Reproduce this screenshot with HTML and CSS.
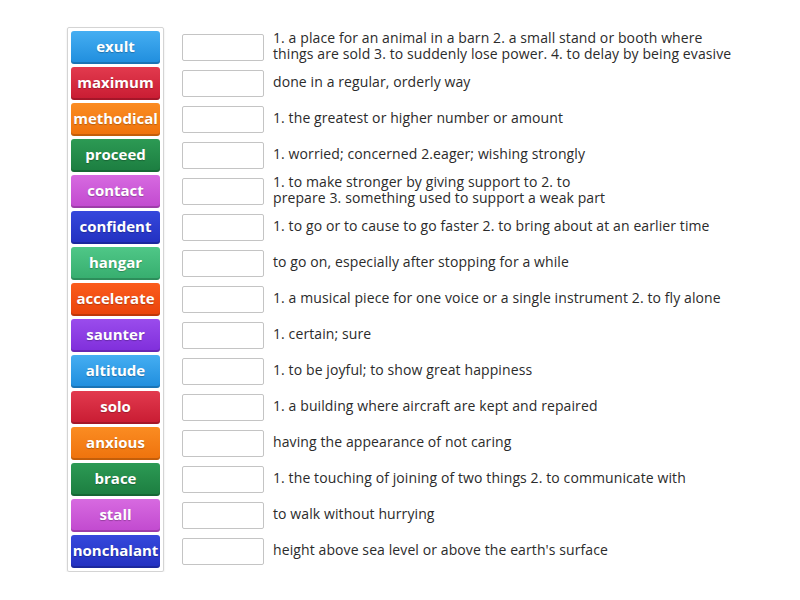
FILE: index.html
```html
<!DOCTYPE html>
<html>
<head>
<meta charset="utf-8">
<title>Match up</title>
<link rel="stylesheet" href="styles.css">
</head>
<body>
<div class="board">
	<div class="tiles">
		<div class="tile blue">exult</div>
		<div class="tile red">maximum</div>
		<div class="tile orange">methodical</div>
		<div class="tile green">proceed</div>
		<div class="tile pink">contact</div>
		<div class="tile navy">confident</div>
		<div class="tile mint">hangar</div>
		<div class="tile fire">accelerate</div>
		<div class="tile purple">saunter</div>
		<div class="tile blue">altitude</div>
		<div class="tile red">solo</div>
		<div class="tile orange">anxious</div>
		<div class="tile green">brace</div>
		<div class="tile pink">stall</div>
		<div class="tile navy">nonchalant</div>
	</div>
	<ul class="targets">
		<li><span class="slot"></span><p>1. a place for an animal in a barn 2. a small stand or booth where things are sold 3. to suddenly lose power. 4. to delay by being evasive</p></li>
		<li><span class="slot"></span><p>done in a regular, orderly way</p></li>
		<li><span class="slot"></span><p>1. the greatest or higher number or amount</p></li>
		<li><span class="slot"></span><p>1. worried; concerned 2.eager; wishing strongly</p></li>
		<li><span class="slot"></span><p>1. to make stronger by giving support to 2. to<br>prepare 3. something used to support a weak part</p></li>
		<li><span class="slot"></span><p>1. to go or to cause to go faster 2. to bring about at an earlier time</p></li>
		<li><span class="slot"></span><p>to go on, especially after stopping for a while</p></li>
		<li><span class="slot"></span><p>1. a musical piece for one voice or a single instrument 2. to fly alone</p></li>
		<li><span class="slot"></span><p>1. certain; sure</p></li>
		<li><span class="slot"></span><p>1. to be joyful; to show great happiness</p></li>
		<li><span class="slot"></span><p>1. a building where aircraft are kept and repaired</p></li>
		<li><span class="slot"></span><p>having the appearance of not caring</p></li>
		<li><span class="slot"></span><p>1. the touching of joining of two things 2. to communicate with</p></li>
		<li><span class="slot"></span><p>to walk without hurrying</p></li>
		<li><span class="slot"></span><p>height above sea level or above the earth's surface</p></li>
	</ul>
</div>
</body>
</html>
```

FILE: styles.css
```css
*{margin:0; padding:0; list-style:none; box-sizing:border-box;}
body{background:#fff; font-family:"Open Sans","Liberation Sans",sans-serif;}
.board{display:flex; align-items:flex-start; margin:27px 0 0 67px;}

.tiles{display:flex; flex-direction:column; gap:3px; padding:3px; border:1px solid #d4d4d4; border-radius:2px; box-shadow:0 1px 2px rgba(0,0,0,0.12);}
.tile{width:89px; height:33px; border-radius:3px; color:#fff; font-size:15px; font-weight:700; text-align:center; line-height:30px; text-shadow:0 1px 1px rgba(0,0,0,0.25); box-shadow:inset 0 -2px 0 rgba(0,0,0,0.18);}
.blue{background:linear-gradient(#45aef2,#1f8ddd);}
.red{background:linear-gradient(#e23a4e,#c81b32);}
.orange{background:linear-gradient(#fb8c22,#ee720c);}
.green{background:linear-gradient(#2c9a54,#1c7d40);}
.pink{background:linear-gradient(#d76ae0,#c149cf);}
.navy{background:linear-gradient(#3548dc,#2230c0);}
.mint{background:linear-gradient(#4fc787,#36ad6e);}
.fire{background:linear-gradient(#fb5c1c,#e9430b);}
.purple{background:linear-gradient(#9a4cec,#7f2edb);}

.targets{display:flex; flex-direction:column; gap:3px; margin:4px 0 0 18px;}
.targets li{display:flex; align-items:center; height:33px;}
.slot{flex:none; width:82px; height:27px; border:1px solid #c4c4c4; border-radius:2px; background:#fff; margin-right:9px;}
.targets p{width:470px; margin-top:-3px; font-size:14px; line-height:16px; letter-spacing:0.1px; color:#2b2b2b;}
```
